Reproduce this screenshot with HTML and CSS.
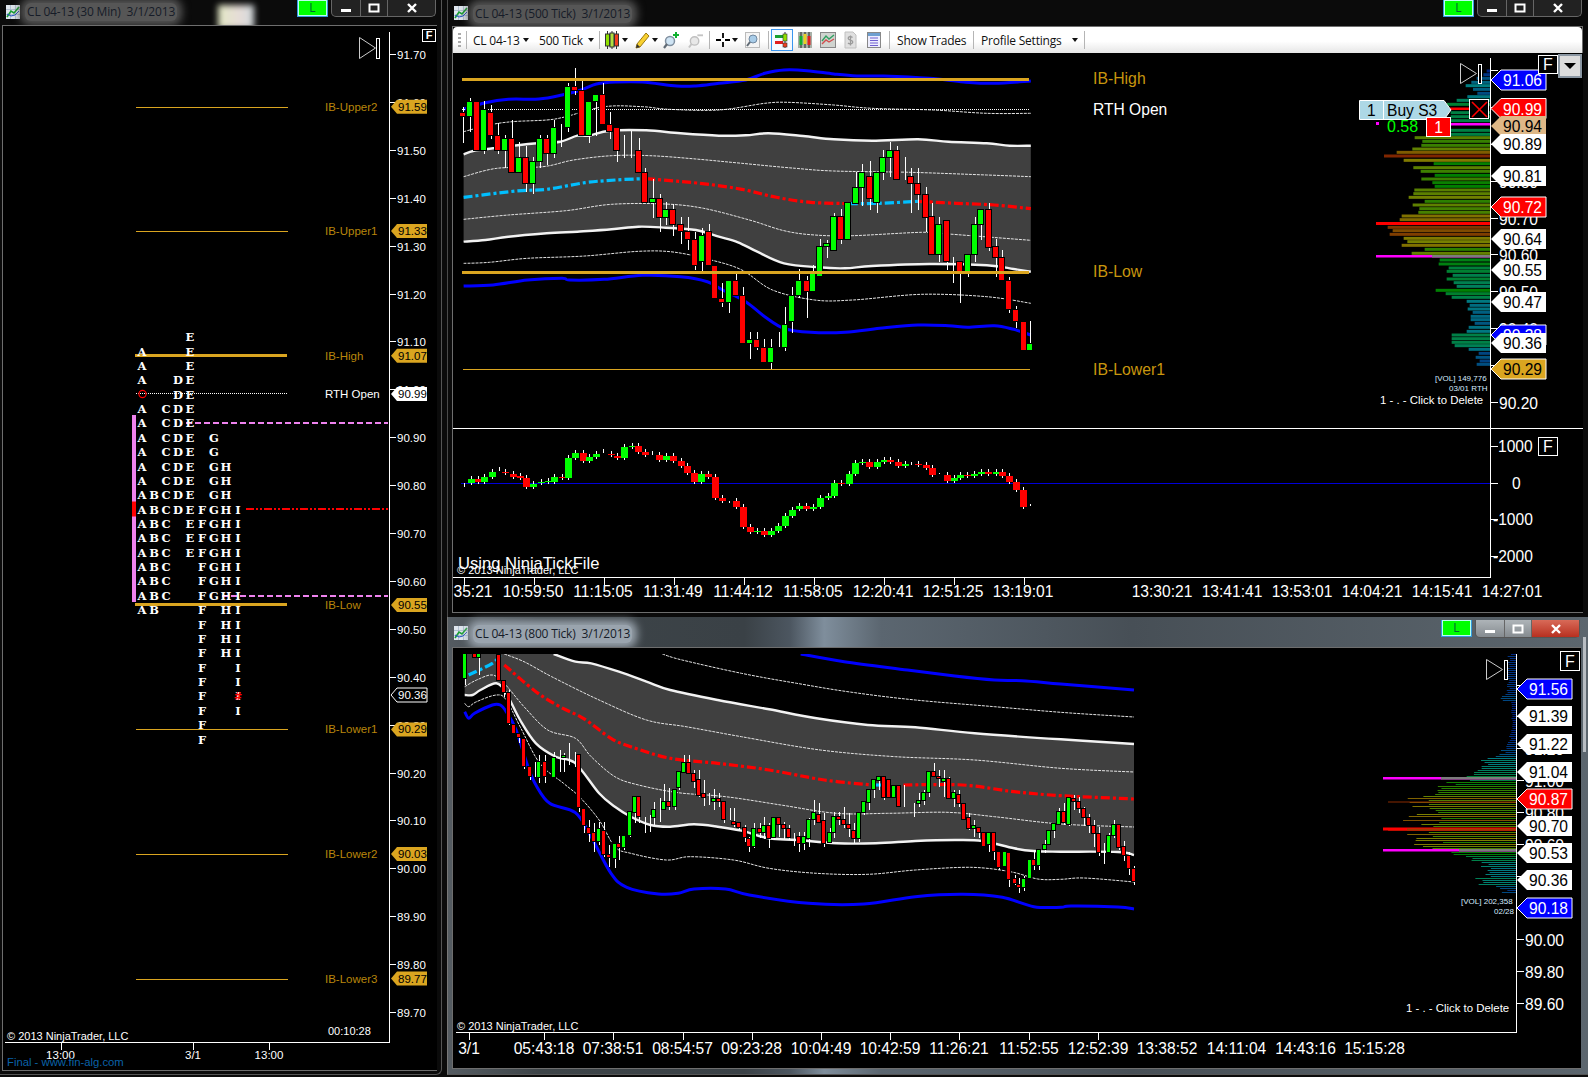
FILE: index.html
```html
<!DOCTYPE html>
<html lang="en">
<head>
<meta charset="utf-8">
<title>CL 04-13 charts</title>
<link rel="stylesheet" href="styles.css">
</head>
<body>
<main class="desktop">
  <div class="blob"></div>

  <section class="win win-a">
    <header class="titlebar">
      <svg class="app-icon" viewBox="0 0 14 14"><rect width="14" height="14" fill="#dfe6ee"/><path d="M0 4.5H14M0 9.5H14M4.5 0V14M9.5 0V14" stroke="#9fb0c4" stroke-width=".7"/><path d="M1 12L5 6L8 8L13 2" fill="none" stroke="#18a030" stroke-width="1.6"/><path d="M1 9L5 11L9 10L13 6" fill="none" stroke="#2050c0" stroke-width="1"/></svg>
      <span class="title">CL 04-13 (30 Min)  3/1/2013</span>
      <span class="link-btn">L</span>
      <div class="caption">
        <span class="cap"><svg viewBox="0 0 12 12"><rect x="1" y="7" width="10" height="3" fill="#fff"/></svg></span>
        <span class="cap"><svg viewBox="0 0 12 12"><rect x="1.5" y="2.5" width="9" height="7" fill="none" stroke="#fff" stroke-width="2"/></svg></span>
        <span class="cap"><svg viewBox="0 0 12 12"><path d="M2 2L10 10M10 2L2 10" stroke="#fff" stroke-width="2.4"/></svg></span>
      </div>
    </header>
    <div class="client"><svg id="chartA" class="chart chart-a" viewBox="3 26 434 1044"></svg></div>
  </section>

  <section class="win win-b">
    <header class="titlebar">
      <svg class="app-icon" viewBox="0 0 14 14"><rect width="14" height="14" fill="#dfe6ee"/><path d="M0 4.5H14M0 9.5H14M4.5 0V14M9.5 0V14" stroke="#9fb0c4" stroke-width=".7"/><path d="M1 12L5 6L8 8L13 2" fill="none" stroke="#18a030" stroke-width="1.6"/><path d="M1 9L5 11L9 10L13 6" fill="none" stroke="#2050c0" stroke-width="1"/></svg>
      <span class="title">CL 04-13 (500 Tick)  3/1/2013</span>
      <span class="link-btn">L</span>
      <div class="caption">
        <span class="cap"><svg viewBox="0 0 12 12"><rect x="1" y="7" width="10" height="3" fill="#fff"/></svg></span>
        <span class="cap"><svg viewBox="0 0 12 12"><rect x="1.5" y="2.5" width="9" height="7" fill="none" stroke="#fff" stroke-width="2"/></svg></span>
        <span class="cap"><svg viewBox="0 0 12 12"><path d="M2 2L10 10M10 2L2 10" stroke="#fff" stroke-width="2.4"/></svg></span>
      </div>
    </header>
    <div class="client">
      <nav class="toolbar">
        <span class="grip m4"></span>
        <span class="sep m5"></span>
        <span class="tb-text w45 m6">CL 04-13</span>
        <span class="arr m5"></span>
        <span class="tb-text w43 m10">500 Tick</span>
        <span class="arr m6"></span>
        <span class="sep m5"></span>
        <svg class="ico i14 m5" viewBox="0 0 14 18"><path d="M2.5 0V18M7 0V18M11.500 0V18" stroke="#333"/><rect x=".5" y="3" width="4" height="12" fill="#8ee000" stroke="#333"/><rect x="5" y="2" width="4" height="14" fill="#b0e040" stroke="#333"/><rect x="9.500" y="3" width="4" height="12" fill="#f04020" stroke="#333"/></svg>
        <span class="arr m3"></span>
        <svg class="ico i16 m6" viewBox="0 0 16 18"><path d="M3 13L12 2L15 5L6 16L2 17Z" fill="#f8d030" stroke="#9a7a10"/><path d="M2 17L3 13L6 16Z" fill="#333"/></svg>
        <span class="arr m2"></span>
        <svg class="ico i16 m5" viewBox="0 0 16 18"><circle cx="7" cy="10" r="4.500" fill="#cfe4f4" stroke="#8090a0" stroke-width="1.500"/><path d="M4 13L1 17" stroke="#606a74" stroke-width="2.200"/><path d="M13 1V7M10 4H16" stroke="#10b030" stroke-width="2"/></svg>
        <svg class="ico i15 m9" viewBox="0 0 16 18"><circle cx="7" cy="10" r="4.500" fill="#e8e8e8" stroke="#c0c0c0" stroke-width="1.500"/><path d="M4 13L1 17" stroke="#c4c4c4" stroke-width="2.200"/><path d="M10 4H16" stroke="#c4c4c4" stroke-width="2"/></svg>
        <span class="sep m6"></span>
        <svg class="ico i14 m6" viewBox="0 0 14 18"><path d="M7 2V7M7 11V16M0 9H5M9 9H14" stroke="#000" stroke-width="1.800"/></svg>
        <span class="arr m2"></span>
        <svg class="ico i15 m7" viewBox="0 0 15 18"><rect x=".5" y="1.500" width="14" height="15" fill="#f4f4f4" stroke="#bbb"/><circle cx="8" cy="8" r="4" fill="#a8cce8" stroke="#7088a0"/><path d="M5 11L2 15" stroke="#606a74" stroke-width="2"/></svg>
        <span class="sep m8"></span>
        <span class="sel m2"><svg class="ico i16" viewBox="0 0 16 18"><path d="M11 1V17" stroke="#333"/><rect x="1" y="4" width="8" height="3" fill="#18a030"/><rect x="1" y="10" width="8" height="3" fill="#e02020"/><rect x="9" y="3" width="4" height="7" fill="#8ee000" stroke="#333" stroke-width=".6"/><rect x="9" y="12" width="4" height="4" fill="#f04020" stroke="#333" stroke-width=".6"/></svg></span>
        <svg class="ico i14 m5" viewBox="0 0 14 18"><rect y="1" width="14" height="16" fill="#a8b0a8"/><path d="M3 1V17M7 1V17M11 1V17" stroke="#222"/><rect x="1.500" y="5" width="3" height="9" fill="#10b030"/><rect x="5.500" y="3" width="3" height="10" fill="#e8d020"/><rect x="9.500" y="5" width="3" height="9" fill="#e02020"/></svg>
        <svg class="ico i16 m8" viewBox="0 0 16 18"><rect x=".5" y="1.500" width="15" height="15" fill="#d0d4d0" stroke="#888"/><path d="M2 10L6 5L9 8L14 4" fill="none" stroke="#30a060" stroke-width="1.400"/><path d="M2 13L6 9L9 11L14 8" fill="none" stroke="#d05050" stroke-width="1.400"/></svg>
        <svg class="ico i13 m8" viewBox="0 0 13 18"><path d="M1 1H9L12 4V17H1Z" fill="#e0e0e0" stroke="#c0c0c0"/><path d="M8.500 6.500C7 5 4 5.500 4.200 7.500C4.400 9.500 8.800 8.500 8.800 11C8.800 13 5.500 13.500 4 12M6.500 4.500V14.500" fill="none" stroke="#9a9a9a" stroke-width="1.300"/></svg>
        <svg class="ico i14 m10" viewBox="0 0 14 18"><rect x=".5" y="1.500" width="13" height="15" fill="#eef" stroke="#888"/><rect x="1" y="2" width="12" height="3" fill="#6f9fd0"/><path d="M3 7H11M3 9.500H11M3 12H11M3 14.500H11" stroke="#7060d0"/></svg>
        <span class="sep m8"></span>
        <span class="tb-text w67 m7">Show Trades</span>
        <span class="sep m9"></span>
        <span class="tb-text w82 m7">Profile Settings</span>
        <span class="arr m9"></span>
        <span class="sep m6"></span>
      </nav>
      <svg id="chartB" class="chart chart-b" viewBox="452 53 1130 559"></svg>
    </div>
  </section>

  <section class="win win-c">
    <header class="titlebar">
      <svg class="app-icon" viewBox="0 0 14 14"><rect width="14" height="14" fill="#dfe6ee"/><path d="M0 4.5H14M0 9.5H14M4.5 0V14M9.5 0V14" stroke="#9fb0c4" stroke-width=".7"/><path d="M1 12L5 6L8 8L13 2" fill="none" stroke="#18a030" stroke-width="1.6"/><path d="M1 9L5 11L9 10L13 6" fill="none" stroke="#2050c0" stroke-width="1"/></svg>
      <span class="title">CL 04-13 (800 Tick)  3/1/2013</span>
      <span class="link-btn">L</span>
      <div class="caption">
        <span class="cap"><svg viewBox="0 0 12 12"><rect x="1" y="7" width="10" height="3" fill="#fff"/></svg></span>
        <span class="cap"><svg viewBox="0 0 12 12"><rect x="1.5" y="2.5" width="9" height="7" fill="none" stroke="#fff" stroke-width="2"/></svg></span>
        <span class="cap cap-close"><svg viewBox="0 0 12 12"><path d="M2 2L10 10M10 2L2 10" stroke="#fff" stroke-width="2.4"/></svg></span>
      </div>
    </header>
    <div class="client"><svg id="chartC" class="chart chart-c" viewBox="452 648 1128 420"></svg></div>
  </section>
</main>
<script src="script.js"></script>
</body>
</html>
```

FILE: styles.css
```css
* { box-sizing: border-box; }
html, body { margin: 0; padding: 0; background: #0b0b0b; overflow: hidden; }
.desktop { position: relative; width: 1588px; height: 1077px; overflow: hidden; background: #0b0b0b; }

.blob {
  position: absolute; left: 218px; top: 5px; width: 36px; height: 24px;
  background: linear-gradient(90deg, #e2e8c4, #e6dcd8 60%, #cfd8dc); filter: blur(3px);
}

.win { position: absolute; display: flex; flex-direction: column; font-family: "Open Sans", "Noto Sans", sans-serif; }
.win-a { left: 0; top: 0; width: 442px; height: 1075px; padding: 0 5px 5px 3px; border-right: 1px solid #555; border-bottom: 1px solid #555; border-radius: 0 0 6px 0; }
.win-b { left: 447px; top: 0; width: 1141px; height: 617px; padding: 0 6px 5px 5px; border-left: 1px solid #4a4a4a; }
.win-c { left: 447px; top: 617px; width: 1141px; height: 458px; padding: 0 8px 7px 5px; border-left: 1px solid #777; border-bottom: 1px solid #555; background: linear-gradient(90deg, #555c62 0, #3d4448 8%, #3a4146 26%, #4c5660 30%, #7f8e9c 33%, #5b6670 38%, #474f56 60%, #5c666e 100%); }
.win-c::after { content: ""; position: absolute; right: 2px; top: 20px; width: 3px; height: 115px; background: #b8bdc2; }

.titlebar { display: flex; align-items: flex-start; flex: none; height: 26px; }
.win-b .titlebar { height: 27px; }
.win-c .titlebar { height: 31px; padding-top: 3px; }

.app-icon { width: 14px; height: 14px; margin: 5px 0 0 3px; flex: none; }
.win-b .app-icon { margin-left: 1px; margin-top: 6px; }
.win-c .app-icon { margin-left: 1px; margin-top: 6px; }

.title {
  margin: 3px auto 0 5px; padding: 1px 2px; font-size: 12px; line-height: 16px; color: #161c28; letter-spacing: -.17px;
  white-space: pre; background: #565656; box-shadow: 0 0 8px 5px #565656; border-radius: 6px;
}
.win-b .title, .win-c .title { margin-top: 5px; }
.win-c .title { background: #9aa4ae; box-shadow: 0 0 8px 5px #9aa4ae; }

.link-btn {
  width: 31px; height: 17px; margin-right: 3px; text-align: center; font: 12px/15px "Open Sans", sans-serif; color: #063;
  background: #00ff00; border: 1px solid #39d; border-top: 0; box-shadow: inset 0 0 0 1px #bfe;
}

.caption {
  display: grid; grid-template-columns: 29px 27px 47px; height: 17px; flex: none;
  border: 1px solid #666; border-top: 0; border-radius: 0 0 5px 5px; background: #222;
}
.cap { display: flex; align-items: center; justify-content: center; border-right: 1px solid #666; }
.cap:last-child { border-right: 0; }
.cap svg { width: 12px; height: 12px; }
.win-c .caption { height: 18px; background: linear-gradient(#aeb4b8, #858b90); border-color: #555; }
.win-c .cap-close { background: linear-gradient(#d86a58, #b83020); }

.client { flex: none; background: #000; box-shadow: 0 0 0 1px #6e6e6e; }
.chart { display: block; background: #000; font-family: "Liberation Sans", Arial, sans-serif; }
.chart-a { width: 434px; height: 1044px; }
.chart-b { width: 1130px; height: 559px; }
.chart-c { width: 1128px; height: 420px; }

.toolbar {
  display: flex; align-items: center; height: 26px; padding: 0 0 0 1px; background: linear-gradient(#fff 0, #fff 55%, #e6e6e6 100%);
  border-radius: 4px 4px 0 0; font-size: 12px; color: #111;
}
.tb-text { white-space: nowrap; letter-spacing: -.2px; flex: none; }
.w45 { width: 45px; } .w43 { width: 43px; } .w67 { width: 67px; } .w82 { width: 82px; }
.grip { width: 3px; height: 14px; background: repeating-linear-gradient(#aaa 0 2px, transparent 2px 4px); }
.sep { width: 1px; height: 18px; background: #b5b5b5; flex: none; }
.arr { width: 0; height: 0; border: 3.5px solid transparent; border-top: 4px solid #111; border-bottom: 0; flex: none; }
.ico { display: block; height: 18px; flex: none; }
.i13 { width: 13px; } .i14 { width: 14px; } .i15 { width: 15px; } .i16 { width: 16px; }
.sel { display: flex; align-items: center; justify-content: center; width: 22px; height: 22px; border: 1px solid #3a96f0; background: #f6faff; flex: none; }
.m2 { margin-left: 2px; } .m3 { margin-left: 3px; } .m4 { margin-left: 4px; } .m5 { margin-left: 5px; }
.m6 { margin-left: 6px; } .m7 { margin-left: 7px; } .m8 { margin-left: 8px; } .m9 { margin-left: 9px; } .m10 { margin-left: 10px; }

/* chart vocabulary */
.axis { stroke: #fff; stroke-width: 1; shape-rendering: crispEdges; }
.t-s { font-size: 11.5px; fill: #fff; }
.t-m { font-size: 15.6px; fill: #fff; }
.t-xs { font-size: 8px; fill: #d6ecff; }
.t-c { font-size: 11px; fill: #fff; }
.t-del { font-size: 11.4px; fill: #fff; }
.t-gold { fill: #b8860b; }
.t-gold-l { font-size: 15.8px; fill: #c8960e; }
.t-gold-s { font-size: 11.5px; fill: #b8860b; }
.t-blue { font-size: 11.3px; fill: #0a62a8; }
.t-big { font-size: 16.6px; fill: #fff; }
.t-green { font-size: 16px; fill: #00ff00; }
.t-blk { fill: #000; }
.t-f-s { font-size: 11px; fill: #fff; font-weight: bold; }
.t-f-l { font-size: 16px; fill: #fff; }
.tpo { font-family: "DejaVu Serif", serif; font-weight: bold; font-size: 11.5px; fill: #fff; text-anchor: middle; }
.tpo-hash { font-family: "DejaVu Sans", sans-serif; font-weight: bold; font-size: 10px; fill: #f00; text-anchor: middle; }
.mid { text-anchor: middle; }
.box { fill: #000; stroke: #fff; stroke-width: 1; shape-rendering: crispEdges; }
.play { fill: none; stroke: #ccc; stroke-width: 1; }
.play-r { fill: #000; stroke: #fff; stroke-width: 1; shape-rendering: crispEdges; }
.ln { fill: none; stroke-linejoin: round; }
.ln-white { stroke: #f2f2f2; stroke-width: 2.4; }
.ln-blue { stroke: #0000ff; stroke-width: 3; }
.ln-thin { stroke: #e4e4e4; stroke-width: 1; stroke-dasharray: 3 1; }
.ln-red { stroke: #ff0000; stroke-width: 3.2; stroke-dasharray: 9 3 3 3; }
.ln-cyan { stroke: #00bfff; stroke-width: 3.2; stroke-dasharray: 9 3 3 3; }
.band { fill: #404040; }
.h-gold { stroke: #daa520; shape-rendering: crispEdges; }
.h-thick { stroke-width: 3; }
.h-thin { stroke-width: 1; }
.h-dot { stroke: #fff; stroke-width: 1; stroke-dasharray: 1 1; shape-rendering: crispEdges; }
.h-pink { stroke: #ee82ee; stroke-width: 2; stroke-dasharray: 6 3; shape-rendering: crispEdges; }
.h-dd { stroke: #f00; stroke-width: 2; stroke-dasharray: 8 2 2 2 2 2; shape-rendering: crispEdges; }
.h-navy { stroke: #0000d8; stroke-width: 1; shape-rendering: crispEdges; }
.wick { stroke: #fff; stroke-width: 1; shape-rendering: crispEdges; }
.up { fill: #00ff00; }
.dn { fill: #ff0000; }
.outl { stroke: #000; stroke-width: 1; shape-rendering: crispEdges; }
.c-pink { fill: #ee82ee; }
.c-red { fill: #f00; }
.c-mag { fill: #ff00ff; }
.c-grey { fill: #7c7c7c; }
.c-brown { fill: #a03800; }
.c-blue { fill: #0000ff; }
.c-white { fill: #fff; }
.c-tan { fill: #deb887; }
.c-gold { fill: #daa520; }
.c-black { fill: #000; }
.c-light { fill: #add8e6; }
.f-line { stroke: #fff; stroke-width: 1; }
.f-none { stroke: none; }
.o-red { stroke: #f00; stroke-width: 1.2; fill: none; }
.x-red { stroke: #f00; stroke-width: 1.6; }
.dd-btn { fill: #dcdcdc; stroke: #8a96a2; stroke-width: 2; }
.order { fill: #add8e6; stroke: #fff; stroke-width: 1; }
```

FILE: script.js
```js
const NS = 'http://www.w3.org/2000/svg';
function el(p, tag, a, text) {
  const e = document.createElementNS(NS, tag);
  for (const k in a) e.setAttribute(k, a[k]);
  if (text !== undefined) e.textContent = text;
  p.appendChild(e);
  return e;
}
function line(p, x1, y1, x2, y2, cls) { return el(p, 'line', { x1, y1, x2, y2, class: cls }); }
function text(p, x, y, s, cls) { return el(p, 'text', { x, y, class: cls }, s); }
function rect(p, x, y, w, h, cls) { return el(p, 'rect', { x, y, width: w, height: h, class: cls }); }
function spline(pts, move) {
  let d = (move === false ? 'L' : 'M') + pts[0][0] + ' ' + pts[0][1];
  for (let i = 0; i < pts.length - 1; i++) {
    const a = pts[i - 1] || pts[i], b = pts[i], c = pts[i + 1], e = pts[i + 2] || c;
    d += 'C' + (b[0] + (c[0] - a[0]) / 6).toFixed(1) + ' ' + (b[1] + (c[1] - a[1]) / 6).toFixed(1) + ' ' +
      (c[0] - (e[0] - b[0]) / 6).toFixed(1) + ' ' + (c[1] - (e[1] - b[1]) / 6).toFixed(1) + ' ' + c[0].toFixed(1) + ' ' + c[1].toFixed(1);
  }
  return d;
}
function curve(p, pts, cls) { return el(p, 'path', { d: spline(pts), class: 'ln ' + cls }); }
function flag(p, x, y, w, h, arrow, label, fill, border, txt, fontCls, pad) {
  const pts = [[x, y], [x + arrow, y - h / 2], [x + w, y - h / 2], [x + w, y + h / 2], [x + arrow, y + h / 2]].join(' ');
  el(p, 'polygon', { points: pts, class: fill + ' ' + (border ? 'f-line' : 'f-none') });
  text(p, x + pad, y + (h > 15 ? 6 : 4), label, fontCls + ' ' + txt);
}
function fbox(p, x, y, w, h, cls) {
  rect(p, x + .5, y + .5, w, h, 'box');
  text(p, x + w / 2 + .5, y + h - (h > 14 ? 3 : 2), 'F', cls + ' mid');
}
function play(p, x, y, w, h, rx, rw) {
  el(p, 'polygon', { points: [[x, y], [x + w, y + h / 2], [x, y + h]].join(' '), class: 'play' });
  rect(p, rx + .5, y + .5, rw, h - 1, 'play-r');
}
function candles(p, data, fx, fy, bw) {
  const half = Math.floor(bw / 2);
  data.forEach(d => {
    const [zx, c, t, b, wt, wb] = d, X = Math.round(fx(zx));
    const W = X + .5;
    line(p, W, fy(wt === undefined ? t : wt), W, fy(wb === undefined ? b : wb), 'wick');
    if (c === 'w') return;
    const y = Math.round(fy(t)) - .5, h = Math.max(Math.round(fy(b)) - Math.round(fy(t)) + 1, 2);
    rect(p, X - half - .5 + (bw % 2 ? 0 : .0), y, bw, h, (c === 'g' ? 'up' : 'dn') + ' outl');
  });
}
function volColor(w, k) {
  const hue = Math.max(8, 230 - k * w);
  return 'hsl(' + hue + ',100%,25%)';
}

/* ---------- 30 minute TPO chart ---------- */
(function () {
  const s = document.getElementById('chartA');
  const py = p => 54 + (91.70 - p) * 479;
  line(s, 389.5, 32, 389.5, 1042.5, 'axis');
  line(s, 5, 1042.5, 390, 1042.5, 'axis');
  for (let i = 0; i <= 20; i++) {
    const p = 91.7 - i * .1, y = Math.round(py(p)) + .5;
    line(s, 390, y, 396, y, 'axis');
    text(s, 397, y + 4, p.toFixed(2), 't-s');
  }
  [[60.5, '13:00'], [193, '3/1'], [269, '13:00']].forEach(([x, l]) => {
    line(s, Math.round(x) + .5, 1042, Math.round(x) + .5, 1050, 'axis');
    text(s, x, 1059, l, 't-s mid');
  });
  text(s, 7, 1066, 'Final - www.fin-alg.com', 't-blue');
  text(s, 7, 1040, '© 2013 NinjaTrader, LLC', 't-c');
  text(s, 328, 1035, '00:10:28', 't-c');
  fbox(s, 422, 29, 13, 12, 't-f-s');
  play(s, 359.5, 37.5, 16, 21, 376, 3);

  // Session reference lines
  [[106.7, 'IB-Upper2', 91.59], [231, 'IB-Upper1', 91.33], [729.4, 'IB-Lower1', 90.29], [854, 'IB-Lower2', 90.03], [978.5, 'IB-Lower3', 89.77]].forEach(([y, l]) => {
    line(s, 136, Math.round(y) + .5, 288, Math.round(y) + .5, 'h-gold h-thin');
    text(s, 325, y + 4, l, 't-gold-s');
  });
  line(s, 135, 355.5, 287, 355.5, 'h-gold h-thick'); text(s, 325, 360, 'IB-High', 't-gold-s');
  line(s, 135, 604.5, 287, 604.5, 'h-gold h-thick'); text(s, 325, 609, 'IB-Low', 't-gold-s');
  line(s, 136, 393.5, 288, 393.5, 'h-dot'); text(s, 325, 398, 'RTH Open', 't-s');

  rect(s, 132, 415, 4, 187, 'c-pink');
  rect(s, 132, 501.5, 4, 15, 'c-red');
  line(s, 186, 423, 388, 423, 'h-pink');
  line(s, 222, 596, 388, 596, 'h-pink');
  line(s, 246, 509, 388, 509, 'h-dd');

  const rows = [
    '    E', 'A   E', 'A   E', 'A  DE', '   DE', 'A CDE', 'A CDE', 'A CDE G', 'A CDE G', 'A CDE GH', 'A CDE GH',
    'ABCDE GH', 'ABCDEFGHI', 'ABC EFGHI', 'ABC EFGHI', 'ABC EFGHI', 'ABC  FGHI', 'ABC  FGHI', 'ABC  FGHI',
    'AB   F HI', '     F HI', '     F HI', '     F HI', '     F  I', '     F  I', '     F', '     F  I', '     F', '     F'
  ];
  rows.forEach((r, i) => {
    const y = 336.7 + 14.37 * i;
    [...r].forEach((ch, c) => { if (ch !== ' ') text(s, 142 + 12 * c, y + 4.5, ch, 'tpo'); });
  });
  el(s, 'circle', { cx: 142.5, cy: 394, r: 3.6, class: 'o-red' });
  text(s, 238, 336.7 + 14.37 * 25 + 4.5, 'I', 'tpo');
  text(s, 238, 336.7 + 14.37 * 25 + 4, '#', 'tpo-hash');

  const W = 36, H = 14;
  flag(s, 391, 106.7, W, H, 6, '91.59', 'c-gold', false, 't-blk', 't-s', 7);
  flag(s, 391, 231, W, H, 6, '91.33', 'c-gold', false, 't-blk', 't-s', 7);
  flag(s, 391, 355.8, W, H, 6, '91.07', 'c-gold', false, 't-blk', 't-s', 7);
  flag(s, 391, 394, W, H, 6, '90.99', 'c-white', false, 't-blk', 't-s', 7);
  flag(s, 391, 605, W, H, 6, '90.55', 'c-gold', false, 't-blk', 't-s', 7);
  flag(s, 391, 695, W, H, 6, '90.36', 'c-black', true, '', 't-s', 7);
  flag(s, 391, 729.4, W, H, 6, '90.29', 'c-gold', false, 't-blk', 't-s', 7);
  flag(s, 391, 854, W, H, 6, '90.03', 'c-gold', false, 't-blk', 't-s', 7);
  flag(s, 391, 978.5, W, H, 6, '89.77', 'c-gold', false, 't-blk', 't-s', 7);
})();

/* ---------- 500 tick chart ---------- */
(function () {
  const s = document.getElementById('chartB');
  const X = z => 450 + z / 2.613, Y = z => 60 + z / 3;
  const P = a => a.map(([x, y]) => [X(x), Y(y)]);
  const up = [[33,283],[60,272],[110,265],[180,255],[225,250],[285,245],[330,227],[360,227],[415,212],[510,211],[600,220],[700,227],[770,226],[830,220],[920,228],[1000,238],[1100,242],[1220,238],[1300,245],[1400,250],[1460,257],[1515,257]];
  const lo = [[33,545],[90,540],[150,530],[250,520],[330,515],[420,508],[490,500],[560,503],[640,510],[700,530],[750,547],[800,575],[870,610],[960,622],[1030,625],[1100,618],[1250,612],[1400,616],[1470,627],[1515,635]];
  el(s, 'path', { d: spline(P(up)) + spline(P(lo).reverse(), false) + 'Z', class: 'band' });
  curve(s, P([[33,215],[100,195],[160,185],[250,180],[300,170],[400,140],[500,140],[570,148],[700,150],[820,130],[880,127],[1000,135],[1100,145],[1260,150],[1400,160],[1515,160]]), 'ln-thin');
  curve(s, P([[33,350],[120,325],[240,320],[320,300],[420,287],[520,287],[640,297],[760,310],[900,325],[1000,333],[1200,337],[1400,345],[1515,350]]), 'ln-thin');
  curve(s, P([[33,478],[150,465],[300,452],[420,433],[560,432],[660,445],[780,480],[870,512],[950,525],[1050,527],[1230,517],[1300,522],[1515,541]]), 'ln-thin');
  curve(s, P([[33,610],[100,607],[200,595],[350,588],[490,574],[580,576],[680,600],[760,630],[840,690],[950,720],[1050,720],[1230,703],[1400,710],[1515,730]]), 'ln-thin');
  curve(s, P(up), 'ln-white');
  curve(s, P(lo), 'ln-white');
  curve(s, P([[33,148],[90,128],[150,118],[230,117],[290,105],[340,90],[380,72],[430,66],[500,66],[590,78],[640,78],[700,70],[770,60],[820,40],[870,30],[930,32],[1000,42],[1060,48],[1130,48],[1250,55],[1340,66],[1420,70],[1515,63]]), 'ln-blue');
  curve(s, P([[33,678],[110,675],[200,660],[290,655],[310,660],[400,658],[500,646],[600,650],[670,665],[710,690],[770,725],[820,770],[870,805],[940,817],[1030,817],[1120,805],[1220,795],[1300,797],[1350,802],[1420,797],[1470,808],[1515,825]]), 'ln-blue');
  curve(s, P([[33,412],[170,393],[250,388],[350,368],[430,360],[500,356]]), 'ln-cyan');
  curve(s, P([[510,356],[650,370],[760,388],[850,412],[940,427],[1040,431]]), 'ln-red');
  curve(s, P([[1040,431],[1120,430],[1220,424]]), 'ln-cyan');
  curve(s, P([[1220,424],[1320,430],[1420,435],[1515,446]]), 'ln-red');
  line(s, 461, 109.5, 1029, 109.5, 'h-dot');

  const data = [
    [32,'r',160,168,140,248],[50,'g',126,168,113,215],[69,'r',126,270],[87,'g',150,270,123,282],[105,'r',160,225,135,237],
    [124,'r',228,270,190,282],[142,'g',237,270,225,325],[160,'r',237,337,180,337],[178,'g',293,337,247,337],[197,'r',293,370,258,395],
    [215,'g',305,370,292,403],[233,'g',237,303,225,325],[252,'r',237,280,225,315],[270,'g',204,280,180,295],[288,'w',192,260],
    [307,'g',81,201,68,215],[325,'r',82,90,25,105],[343,'r',93,225,57,225],[361,'g',126,225,126,248],[380,'g',105,123,105,228],
    [398,'r',105,192,68,192],[416,'r',195,213,155,237],[435,'r',204,270,204,305],[453,'w',225,293],[471,'w',212,295],
    [490,'r',272,337,235,337],[508,'r',339,426,325,426],[527,'g',417,426,357,473],[545,'r',417,472,402,515],[563,'g',450,472,427,495],
    [581,'r',450,492,432,527],[600,'r',495,513,470,552],[618,'r',516,537,472,570],[637,'r',540,615,515,630],[655,'g',528,603,505,638],
    [673,'r',516,615,492,615],[691,'r',618,713],[709,'r',717,725,670,740],[727,'g',663,725,663,760],[746,'r',663,705,635,705],
    [764,'r',708,849,682,849],[782,'g',840,849,815,897],[800,'r',840,861,815,870],[819,'r',864,905,838,905],[837,'g',864,905,838,930],
    [856,'w',815,860],[874,'g',795,860,740,872],[892,'g',708,782,682,818],[910,'g',663,705,627,715],[929,'r',663,693,648,773],
    [947,'g',637,693,615,693],[965,'g',560,648,537,648],[983,'g',551,558,540,593],[1002,'g',472,570,460,570],[1020,'r',472,537,447,552],
    [1038,'g',428,537],[1057,'g',383,428,335,428],[1075,'g',338,381,312,437],[1094,'r',350,415,303,450],[1112,'g',338,426,338,460],
    [1130,'g',293,337,270,360],[1148,'g',272,291,246,350],[1166,'r',272,358,258,358],[1185,'w',292,360],[1203,'r',350,370,325,460],
    [1221,'r',372,403,325,450],[1240,'r',405,472,382,517],[1258,'r',472,583,428,583],[1276,'g',495,583,470,605],[1295,'r',482,603,482,630],
    [1313,'w',590,670],[1331,'r',605,637,605,728],[1350,'g',584,637,584,650],[1368,'g',495,583,470,605],[1386,'g',450,492,450,540],
    [1405,'r',450,560,428,572],[1423,'r',561,592,538,650],[1441,'r',594,660,570,660],[1459,'r',663,747,650,760],[1477,'r',750,783,738,805],
    [1496,'r',786,870],[1514,'g',852,870,783,870]
  ];
  candles(s, data, X, Y, 6);
  line(s, 461, 79.5, 1028, 79.5, 'h-gold h-thick');
  line(s, 461, 272.5, 1028, 272.5, 'h-gold h-thick');
  line(s, 462, 369.5, 1029, 369.5, 'h-gold h-thin');

  text(s, 1092, 84, 'IB-High', 't-gold-l');
  text(s, 1092, 115, 'RTH Open', 't-m');
  text(s, 1092, 277, 'IB-Low', 't-gold-l');
  text(s, 1092, 375, 'IB-Lower1', 't-gold-l');

  // volume profile
  const top = [[213,558],[224,548],[235,528],[247,512],[257,495],[268,517],[280,530],[290,500],[301,468],[313,438],[338,450],[350,450],[362,450],[391,450],[403,450],[413,342],[424,365],[436,362],[447,335],[457,288],[468,250],[481,309],[491,399],[503,338],[514,360],[526,402],[537,362],[548,395],[559,402],[570,341],[581,338],[592,324],[604,372],[615,336],[626,356],[637,353],[648,303],[659,297],[682,261],[692,276],[703,267],[715,309]];
  const low = [[5,320],[16,303],[28,372],[40,333],[60,417],[72,414],[84,444],[94,438],[106,456],[117,438],[128,459],[139,468],[151,405],[161,435],[172,453],[184,498],[196,507],[207,501],[217,516],[229,510],[239,510],[250,522],[262,504],[274,498],[285,453],[296,453],[307,453],[317,462],[328,504],[340,534],[352,525],[363,537],[373,528]];
  const bar = (y, zx) => {
    const w = (568 - zx) / 3;
    el(s, 'rect', { x: 1489 - w, y: y - 1.5, width: w, height: 3, fill: volColor(w, 2) });
  };
  top.forEach(([y, x]) => bar(y / 3, x));
  low.forEach(([y, x]) => bar(240 + y / 3, x));
  rect(s, 1449, 107.5, 19, 2.5, 'c-red');
  rect(s, 1450, 123, 39, 2.5, 'c-mag');
  rect(s, 1375, 222, 114, 3, 'c-red');
  rect(s, 1375, 255, 114, 2.5, 'c-mag');
  rect(s, 1431, 255, 58, 2.5, 'c-grey');

  text(s, 1434, 381, '[VOL] 149,776', 't-xs');
  text(s, 1448, 391, '03/01 RTH', 't-xs');
  text(s, 1379, 404, '1 -  . - Click to Delete', 't-del');

  play(s, 1459.5, 63.5, 16, 20, 1477, 3);

  // axis
  line(s, 1489.5, 58, 1489.5, 577, 'axis');
  line(s, 452, 428.5, 1582, 428.5, 'axis');
  line(s, 452, 577.5, 1490, 577.5, 'axis');
  for (let i = 0; i < 10; i++) {
    const p = 90.2 + i * .1, y = Math.round(402 - (p - 90.2) * 369) + .5;
    line(s, 1490, y, 1497, y, 'axis');
    if (i < 9) text(s, 1498, y + 6, p.toFixed(2), 't-m');
  }
  const F = (y, l, c, b, t) => flag(s, 1490, y, 55, 20, 10, l, c, b, t, 't-m', 12);
  F(80, '91.06', 'c-blue', true, '');
  F(108.5, '90.99', 'c-red', true, '');
  F(126, '90.94', 'c-tan', false, 't-blk');
  F(144, '90.89', 'c-white', false, 't-blk');
  F(176, '90.81', 'c-white', false, 't-blk');
  F(207, '90.72', 'c-red', true, '');
  F(239, '90.64', 'c-white', false, 't-blk');
  F(270, '90.55', 'c-white', false, 't-blk');
  F(302, '90.47', 'c-white', false, 't-blk');
  F(335, '90.38', 'c-blue', true, '');
  F(343, '90.36', 'c-white', false, 't-blk');
  F(369, '90.29', 'c-gold', true, 't-blk');

  // order marker
  el(s, 'polygon', { points: '1358.5,100.5 1443,100.5 1450,110 1443,119.5 1358.5,119.5', class: 'order' });
  line(s, 1382.5, 100, 1382.5, 120, 'axis');
  text(s, 1366, 116, '1', 't-m t-blk');
  text(s, 1386, 116, 'Buy S3', 't-m t-blk');
  rect(s, 1468.5, 99.5, 19, 19, 'box');
  line(s, 1471, 102, 1486, 117, 'x-red');
  line(s, 1486, 102, 1471, 117, 'x-red');
  rect(s, 1375, 122, 3, 3, 'c-mag');
  text(s, 1386, 132, '0.58', 't-green');
  el(s, 'rect', { x: 1425.5, y: 117.5, width: 24, height: 19, class: 'c-red f-line' });
  text(s, 1437.5, 133, '1', 't-m mid');

  fbox(s, 1537, 55, 19, 18, 't-f-l');
  rect(s, 1558, 55, 22, 22, 'dd-btn');
  el(s, 'polygon', { points: '1563,63 1575,63 1569,69', class: 'c-black' });

  // lower pane
  [[446, '1000', 1497], [483, '0', 1511], [519, '-1000', 1492], [556, '-2000', 1492]].forEach(([y, l, x]) => {
    line(s, 1490, y + .5, 1497, y + .5, 'axis');
    text(s, x, y + 6, l, 't-m');
  });
  fbox(s, 1537, 437, 19, 18, 't-f-l');
  line(s, 460, 483.5, 1489, 483.5, 'h-navy');
  const low2 = [[75,'g',176,188],[93,'r',178,186],[110,'g',171,186],[128,'g',155,171],[163,'r',155,160],[181,'r',163,171],[199,'r',168,173],[216,'r',174,200],[234,'g',192,202],[252,'g',186,190],[270,'g',184,187],[287,'g',171,186],[305,'r',171,174],[322,'g',113,173],[340,'g',98,113],[358,'r',98,122],[375,'g',110,122],[393,'g',101,110],[429,'r',102,106],[446,'r',108,113],[464,'g',81,113],[482,'g',78,80],[499,'r',78,96],[517,'r',96,104],[552,'r',105,119],[570,'g',108,119],[588,'r',108,122],[606,'r',123,137],[623,'r',138,158],[641,'r',160,185],[659,'g',161,185],[676,'r',161,171],[694,'r',171,233],[712,'r',234,242],[747,'r',243,260],[765,'r',261,320],[783,'r',322,336],[800,'g',333,336],[818,'r',334,344],[836,'g',334,345],[853,'g',318,333],[871,'g',287,318],[889,'g',269,287],[907,'g',258,268],[924,'r',258,267],[942,'g',261,267],[960,'g',234,260],[978,'g',228,233],[995,'g',189,228],[1013,'r',189,193],[1031,'g',162,191],[1048,'g',129,161],[1066,'g',126,129],[1084,'r',126,141],[1102,'g',126,141],[1120,'g',120,125],[1137,'r',120,127],[1155,'r',127,137],[1173,'g',132,137],[1208,'r',132,135],[1226,'r',136,144],[1243,'r',144,164],[1279,'r',165,183],[1297,'g',174,183],[1314,'g',165,173],[1332,'r',165,168],[1349,'g',162,167],[1367,'g',156,162],[1385,'r',156,161],[1403,'g',156,162],[1420,'r',156,167],[1438,'r',168,185],[1456,'r',186,209],[1473,'r',210,260]];
  const lx = z => 440 + z / 2.53, ly = z => 420 + z / 3;
  low2.forEach(([z, c, t, b]) => {
    const x = Math.round(lx(z));
    line(s, x + .5, ly(t) - 3, x + .5, ly(b) + 2, 'wick');
    rect(s, x - 3, Math.round(ly(t)), 7, Math.max(1, Math.round(ly(b)) - Math.round(ly(t))), c === 'g' ? 'up' : 'dn');
  });
  [[57,188,200],[146,142,152],[411,88,100],[534,94,106],[729,242,250],[1190,127,135],[1261,158,162],[1491,253,258]].forEach(([z, t, b]) => {
    const x = Math.round(lx(z)) + .5;
    line(s, x, ly(t), x, ly(b), 'wick');
  });

  text(s, 457, 569, 'Using NinjaTickFile', 't-big');
  text(s, 456, 574, '© 2013 NinjaTrader, LLC', 't-c');

  const ticks = ['35:21', '10:59:50', '11:15:05', '11:31:49', '11:44:12', '11:58:05', '12:20:41', '12:51:25', '13:19:01'];
  ticks.forEach((l, i) => {
    const x = Math.round(462.5 + i * 70) + .5;
    line(s, x, 577, x, 585, 'axis');
    text(s, i === 0 ? 472 : x - 1.5, 597, l, 't-m mid');
  });
  ['13:30:21', '13:41:41', '13:53:01', '14:04:21', '14:15:41', '14:27:01'].forEach((l, i) => {
    text(s, 1161 + i * 70, 597, l, 't-m mid');
  });
})();

/* ---------- 800 tick chart ---------- */
(function () {
  const s = document.getElementById('chartC');
  const X = z => 440 + z / 2.53, Y = z => 640 + z / 3;
  const P = (a, extra) => a.map(([x, y]) => [X(x), Y(y)]).concat(extra || []);
  const up = P([[285,42],[340,65],[380,70],[450,95],[520,125],[580,150],[700,180],[830,208],[950,235],[1080,255],[1200,262],[1350,280],[1568,298]], [[1133,744]]);
  const lo = P([[60,165],[80,165],[100,150],[140,130],[165,160],[200,240],[240,310],[290,350],[340,370],[400,460],[440,500],[480,530],[530,555],[580,560],[640,553],[700,560],[760,572],[830,595],[900,600],[1000,610],[1100,610],[1200,603],[1300,600],[1370,603],[1450,625],[1500,633],[1568,635]], [[1117,852],[1133,855]]);
  el(s, 'path', { d: 'M' + X(60) + ' 654L' + X(285) + ' 654' + spline(up, false) + spline(lo.slice().reverse(), false) + 'Z', class: 'band' });
  curve(s, P([[160,42],[210,65],[280,110],[400,180],[520,240],[620,260],[760,290],[960,330],[1150,350],[1350,360],[1568,385]], [[1133,772]]), 'ln-thin');
  curve(s, P([[60,140],[90,120],[130,105],[160,130],[210,200],[270,270],[340,295],[380,350],[440,410],[500,435],[600,458],[720,470],[860,495],[1000,520],[1130,520],[1280,517],[1400,530],[1568,552]], [[1133,827]]), 'ln-thin');
  curve(s, P([[560,42],[610,60],[760,100],[900,130],[1040,157],[1200,180],[1400,200],[1568,217]], [[1133,717]]), 'ln-thin');
  curve(s, P([[60,190],[70,200],[90,185],[140,165],[165,180],[200,260],[250,370],[310,430],[350,470],[400,540],[440,620],[480,640],[570,660],[630,650],[740,660],[830,685],[950,700],[1080,703],[1200,690],[1340,682],[1440,695],[1510,717],[1568,718]], [[1083,878],[1133,882]]), 'ln-thin');
  curve(s, up, 'ln-white');
  curve(s, lo, 'ln-white');
  curve(s, P([[910,42],[1020,65],[1180,90],[1300,108],[1400,120],[1470,122],[1568,132]], [[1133,690]]), 'ln-blue');
  curve(s, P([[60,215],[70,235],[85,220],[130,195],[150,195],[165,215],[190,270],[220,380],[240,435],[275,490],[340,518],[380,590],[430,700],[470,742],[550,762],[600,760],[640,747],[720,747],[780,765],[930,790],[1070,792],[1200,770],[1320,763],[1420,772],[1500,800],[1568,802]], [[1070,906],[1117,907],[1133,909]]), 'ln-blue');
  curve(s, P([[70,105],[130,70],[150,45]]), 'ln-cyan');
  curve(s, P([[160,75],[240,155],[300,200],[360,235],[430,295],[480,320],[580,355],[700,370],[830,390],[970,420],[1090,435]]), 'ln-red');
  curve(s, P([[1100,435],[1130,435]]), 'ln-cyan');
  curve(s, P([[1170,435],[1320,435],[1450,455],[1568,467]], [[1133,799]]), 'ln-red');

  const data = [
    [60,'g',42,115,42,135],[85,'r',42,50],[97,'g',42,50,42,105],[148,'r',45,120],[160,'r',122,155,122,170],[173,'r',160,250,150,255],[185,'r',255,278],[198,'r',282,292,282,310],[211,'r',297,377,297,388],[224,'r',380,407,380,420],[237,'w',365,410],[248,'g',365,412,345,430],[262,'r',365,407,345,430],[287,'g',353,412,335,412],[300,'w',330,395],[312,'g',348,352,340,395],[325,'w',310,375],[338,'w',335,380],[350,'r',345,502,345,515],[363,'r',508,555,508,580],[375,'r',565,578,540,605],[388,'r',580,602,550,635],[401,'g',568,602,545,615],[413,'r',572,642,545,650],[426,'r',646,650,615,680],[439,'g',612,655,612,685],[451,'r',612,620,588,660],[464,'g',588,620,588,630],[477,'g',516,585,516,590],[490,'g',472,515,472,550],[502,'r',472,528,472,550],[515,'w',530,578],[528,'w',525,575],[540,'g',510,530,485,555],[553,'w',475,545],[565,'g',485,507,432,507],[578,'r',485,497,445,510],[591,'g',450,497,450,510],[603,'g',395,442,395,450],[616,'g',368,395,345,395],[628,'r',368,400,345,400],[641,'r',402,422,390,445],[653,'r',420,465,390,470],[666,'r',462,472,420,498],[678,'w',458,495],[691,'g',478,484,448,510],[704,'r',478,484,460,500],[717,'r',485,537,485,550],[730,'w',505,540],[742,'r',545,552,505,560],[755,'r',550,560,545,570],[768,'r',563,592,555,605],[780,'r',597,617,590,635],[793,'g',568,618,548,625],[806,'r',568,575,550,595],[818,'g',558,575,530,598],[831,'r',558,593,550,625],[843,'g',533,592,530,600],[856,'r',533,552,530,590],[869,'r',555,565,545,598],[881,'r',567,590,555,600],[894,'w',580,618],[906,'r',592,608,575,635],[919,'g',590,608,575,630],[932,'g',540,595,535,620],[944,'g',520,538,480,555],[957,'r',525,545,490,550],[970,'r',543,608,520,620],[983,'g',580,606,565,610],[995,'g',530,575,515,595],[1008,'r',530,537,515,555],[1020,'r',540,552,500,565],[1033,'r',555,565,520,590],[1046,'r',573,595,550,610],[1058,'g',518,595,515,605],[1071,'g',485,515,485,525],[1083,'g',450,485,450,510],[1096,'g',420,448,420,475],[1108,'g',412,420,410,450],[1121,'r',412,472,410,480],[1133,'r',420,472],[1146,'g',437,472,437,475],[1159,'r',437,498],[1172,'w',435,500],[1197,'w',490,532],[1210,'g',483,490,460,500],[1222,'g',460,480,450,495],[1235,'g',395,457,395,470],[1248,'r',395,408,370,410],[1261,'r',410,415,390,440],[1273,'g',418,423,390,470],[1286,'r',418,473,410,475],[1298,'g',460,473,450,500],[1311,'r',465,490,450,500],[1324,'r',492,537,490,540],[1337,'r',535,565,520,570],[1349,'g',558,563,540,590],[1362,'r',563,575,563,595],[1375,'r',580,617,580,620],[1387,'g',580,612,575,635],[1400,'r',578,632,575,660],[1413,'r',636,680,636,690],[1426,'g',636,678,636,680],[1438,'r',640,717,640,742],[1451,'r',718,730,705,735],[1463,'r',736,740,715,758],[1476,'g',718,740,708,752],[1489,'g',660,715,660,718],[1501,'r',660,675,630,690],[1514,'g',630,675,630,690],[1527,'g',615,628,600,640],[1539,'g',573,613,570,615],[1552,'g',555,570,548,580]
  ];
  candles(s, data, X, Y, 4);
  const data2 = [[10,'g',193,210,193,235],[25,'g',155,192,145,195],[40,'r',155,187,130,195],[55,'g',115,192,115,198],[70,'r',118,122,105,150],[85,'r',125,145,110,158],[100,'r',147,172,140,197],[115,'r',173,195,163,220],[130,'r',197,220,180,260],[145,'r',222,277,200,288],[160,'w',250,312],[175,'g',227,277,220,277],[190,'g',195,226,180,235],[205,'r',195,262,195,270],[220,'r',260,285,243,302],[235,'r',288,323,275,345],[250,'r',327,362,318,375]];
  candles(s, data2, z => 1050 + z / 3, z => 760 + z / 3, 4);

  rect(s, 452, 648, 1060, 6, 'c-black');

  // volume profile
  const env = [[654,7],[680,8],[695,9],[699,23],[701,4],[730,4],[742,8],[752,14],[758,27],[765,36],[772,45],[780,55],[787,70],[795,85],[805,105],[812,85],[820,100],[828,105],[838,105],[846,80],[852,55],[858,60],[864,38],[870,26],[876,30],[880,40],[885,30],[889,12],[892,12]];
  let seed = 7;
  const rnd = () => (seed = (seed * 16807) % 2147483647) / 2147483647;
  for (let y = 654; y <= 892; y += 2) {
    let i = 0;
    while (i < env.length - 2 && env[i + 1][0] < y) i++;
    const [y0, w0] = env[i], [y1, w1] = env[i + 1];
    const w = (w0 + (w1 - w0) * Math.min(1, (y - y0) / (y1 - y0))) * (.72 + .5 * rnd());
    el(s, 'rect', { x: 1515 - w, y, width: w, height: 1, fill: volColor(w, 1.7) });
  }
  rect(s, 1382, 777, 133, 2.5, 'c-mag');
  rect(s, 1440, 777, 75, 2.5, 'c-grey');
  rect(s, 1382, 827.5, 133, 3, 'c-red');
  rect(s, 1406, 828.5, 109, 2, 'c-brown');
  rect(s, 1382, 849, 133, 2.5, 'c-mag');
  rect(s, 1458, 849, 57, 2.5, 'c-grey');
  el(s, 'rect', { x: 1387, y: 801.5, width: 128, height: 1, fill: '#8a2a00' });

  text(s, 1460, 904, '[VOL] 202,358', 't-xs');
  text(s, 1493, 914, '02/28', 't-xs');
  text(s, 1405, 1012, '1 -  . - Click to Delete', 't-del');
  play(s, 1485.5, 659.5, 16, 20, 1503, 3);

  line(s, 1515.5, 654, 1515.5, 1033, 'axis');
  line(s, 455, 1032.5, 1516, 1032.5, 'axis');
  for (let i = 0; i < 11; i++) {
    const p = 89.6 + i * .2, y = Math.round(1003 - i * 31.85) + .5;
    line(s, 1516, y, 1523, y, 'axis');
    text(s, 1524, y + 6, p.toFixed(2), 't-m');
  }
  const F = (y, l, c, b, t) => flag(s, 1516, y, 55, 20, 10, l, c, b, t, 't-m', 12);
  F(689, '91.56', 'c-blue', true, '');
  F(716, '91.39', 'c-white', false, 't-blk');
  F(744, '91.22', 'c-white', false, 't-blk');
  F(772, '91.04', 'c-white', false, 't-blk');
  F(799, '90.87', 'c-red', true, '');
  F(826, '90.70', 'c-white', false, 't-blk');
  F(853, '90.53', 'c-white', false, 't-blk');
  F(880, '90.36', 'c-white', false, 't-blk');
  F(908, '90.18', 'c-blue', true, '');
  fbox(s, 1559, 651, 19, 19, 't-f-l');

  text(s, 456, 1030, '© 2013 NinjaTrader, LLC', 't-c');
  [['3/1',468],['05:43:18',543],['07:38:51',612],['08:54:57',681.5],['09:23:28',750.5],['10:04:49',820],['10:42:59',889],['11:26:21',958],['11:52:55',1028],['12:52:39',1097],['13:38:52',1166],['14:11:04',1235.5],['14:43:16',1304.5],['15:15:28',1373.5]].forEach(([l, x], i) => {
    if (i < 10) line(s, Math.round(x) + .5, 1032, Math.round(x) + .5, 1040, 'axis');
    text(s, x, 1054, l, 't-m mid');
  });
})();
```
